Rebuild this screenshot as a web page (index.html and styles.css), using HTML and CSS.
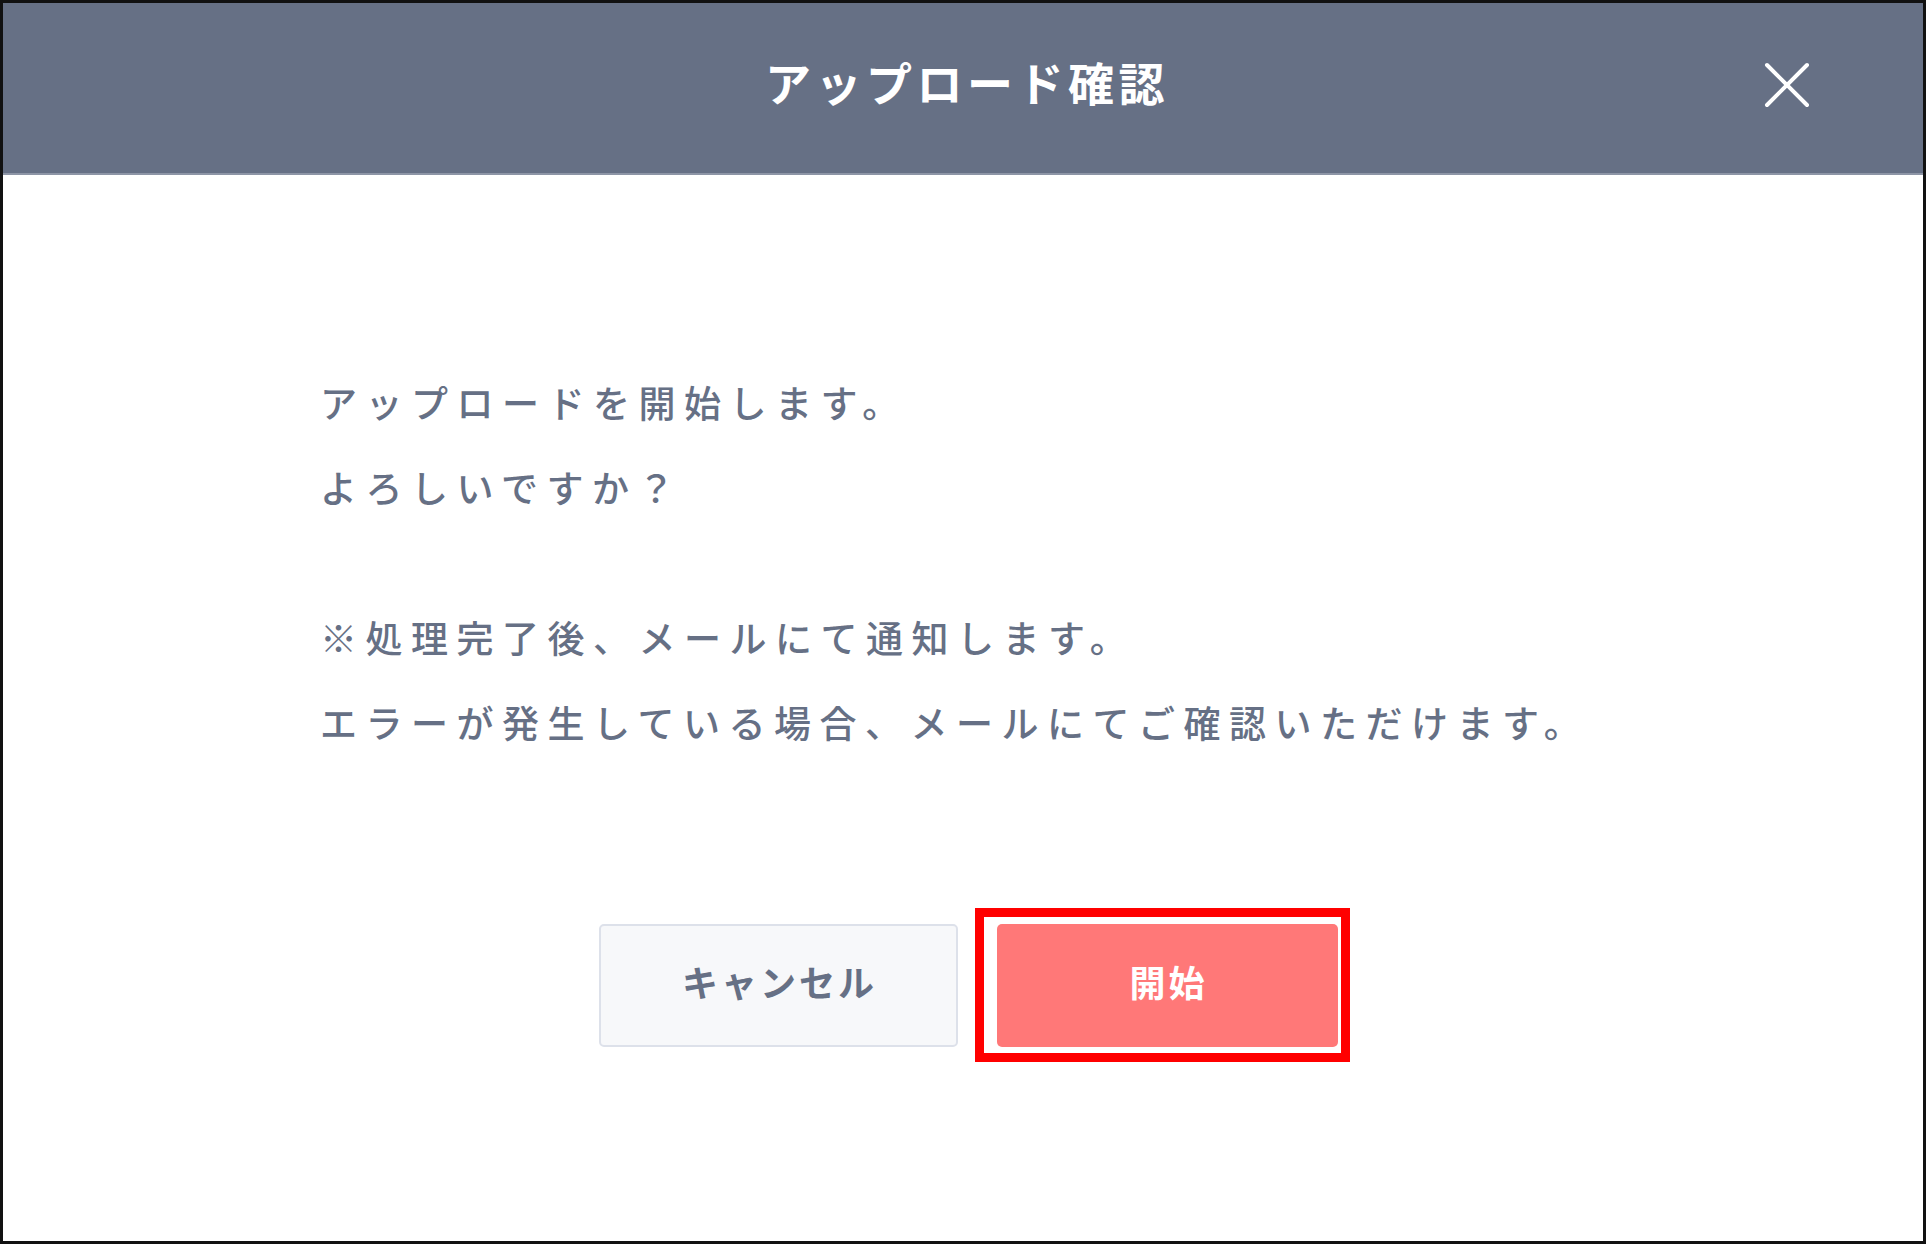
FILE: index.html
```html
<!DOCTYPE html>
<html lang="ja">
<head>
<meta charset="utf-8">
<title>アップロード確認</title>
<link rel="stylesheet" href="styles.css">
</head>
<body>
<div class="frame">
  <div class="header">
    <h1 class="title">アップロード確認</h1>
    <button class="close" aria-label="閉じる">
      <svg width="46" height="46" viewBox="0 0 46 46"><path d="M3 3 L43 43 M43 3 L3 43" stroke="#ffffff" stroke-width="4" stroke-linecap="round" fill="none"/></svg>
    </button>
  </div>
  <div class="content">
    <div class="message">
      <p class="para">アップロードを開始します。<br>よろしいですか？</p>
      <p class="para">※処理完了後、メールにて通知します。<br>エラーが発生している場合、メールにてご確認いただけます。</p>
    </div>
    <div class="actions">
      <button class="btn btn-cancel">キャンセル</button>
      <button class="btn btn-start">開始<span class="highlight"></span></button>
    </div>
  </div>
</div>
</body>
</html>
```
FILE: styles.css
```css
html, body {
  margin: 0;
  padding: 0;
  background: #ffffff;
}
body {
  font-family: "Noto Sans CJK JP", "Noto Sans", sans-serif;
}
.frame {
  box-sizing: border-box;
  width: 1926px;
  height: 1244px;
  border: 3px solid #111111;
  background: #ffffff;
  display: flex;
  flex-direction: column;
}
.header {
  position: relative;
  box-sizing: border-box;
  height: 172px;
  flex: 0 0 auto;
  background: #667085;
  border-bottom: 2px solid #8d95a6;
  display: flex;
  align-items: center;
  justify-content: center;
  padding-bottom: 14px;
}
.title {
  margin: 0;
  color: #ffffff;
  font-size: 46px;
  font-weight: 700;
  letter-spacing: 4.5px;
  line-height: 1;
  padding-left: 8px;
}
.close {
  position: absolute;
  right: 113px;
  top: 59px;
  width: 46px;
  height: 46px;
  padding: 0;
  border: 0;
  background: transparent;
  display: block;
}
.close svg { display: block; }
.content {
  flex: 1 1 auto;
  display: flex;
  flex-direction: column;
}
.message {
  padding: 185px 0 0 317px;
}
.para {
  margin: 0 0 65px 0;
  font-size: 37px;
  line-height: 85px;
  letter-spacing: 8.5px;
  color: #667085;
  font-weight: 500;
}
.para:last-child { margin-bottom: 0; }
.actions {
  margin-top: 159px;
  display: flex;
  justify-content: center;
  gap: 39px;
  padding-left: 10px;
}
.btn {
  position: relative;
  box-sizing: border-box;
  height: 123px;
  border-radius: 5px;
  font-family: "Noto Sans CJK JP", sans-serif;
  font-size: 36px;
  font-weight: 700;
  letter-spacing: 3px;
  padding: 0 0 10px 3px;
}
.btn-cancel {
  width: 359px;
  background: #f7f8fa;
  border: 2px solid #dde1ea;
  color: #667085;
}
.btn-start {
  width: 341px;
  background: #ff7878;
  border: 0;
  color: #ffffff;
}
.highlight {
  position: absolute;
  left: -22px;
  right: -12px;
  top: -16px;
  bottom: -15px;
  border: 9px solid #ff0000;
  pointer-events: none;
}
```
